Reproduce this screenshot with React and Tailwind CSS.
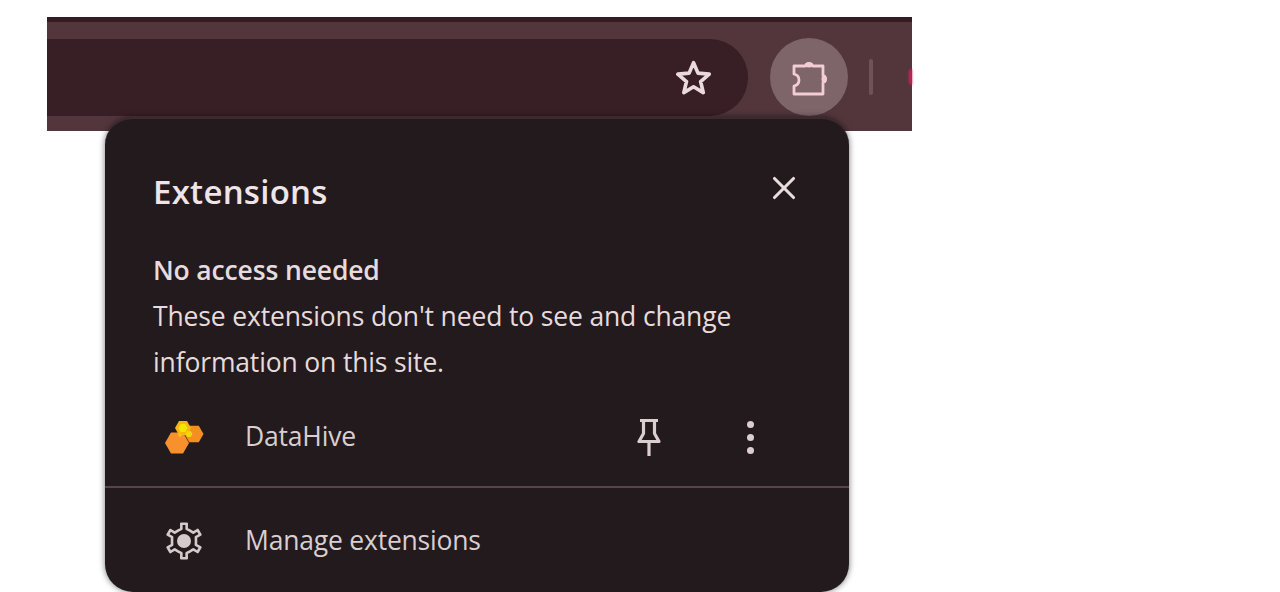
import React from 'react';
import { X } from 'lucide-react';

const FONT = "font-['Open_Sans','Noto_Sans',sans-serif]";

const hexPoints = (cx, cy, r) =>
  [0, 60, 120, 180, 240, 300]
    .map((a) => `${cx + r * Math.cos((a * Math.PI) / 180)},${cy + r * Math.sin((a * Math.PI) / 180)}`)
    .join(' ');

// six teeth, one pointing straight up
const gearPoints = () => {
  const pts = [];
  for (let i = 0; i < 6; i++) {
    const a = -90 + i * 60;
    [[-30, 12], [-12, 12.5], [-9, 17.5], [9, 17.5], [12, 12.5]].forEach(([d, r]) => {
      const t = ((a + d) * Math.PI) / 180;
      pts.push(`${(19 + r * Math.cos(t)).toFixed(2)},${(19 + r * Math.sin(t)).toFixed(2)}`);
    });
  }
  return pts.join(' ');
};

function StarIcon() {
  return (
    <svg width="42" height="42" viewBox="0 0 38 38" fill="none" className="blur-[0.5px]">
      <path d="M19.500 6l4 9.500 10.200.9-7.800 6.700 2.400 10L19.500 27.800l-8.800 5.300 2.400-10-7.800-6.700 10.200-.9z" stroke="#ead9dd" strokeWidth="3.300" strokeLinejoin="round" />
    </svg>
  );
}

function PuzzleIcon() {
  return (
    <svg width="40" height="40" viewBox="0 0 40 40" fill="none" className="blur-[0.5px]">
      <path d="M5 9h11.500c.8-3.500 6.200-3.500 7 0H34v9.500c3.500.8 3.500 6.200 0 7V37H5v-8c3.500-.8 5-3 5-6s-1.500-5.200-5-6z" stroke="#f3ccd6" strokeWidth="2.800" strokeLinejoin="round" />
      <ellipse cx="20" cy="8" rx="4" ry="2.500" fill="#f3ccd6" />
      <ellipse cx="35" cy="22" rx="2.500" ry="4" fill="#f3ccd6" />
    </svg>
  );
}

function PinIcon() {
  return (
    <svg width="28" height="40" viewBox="0 0 28 40" fill="none" className="blur-[0.5px]">
      <path d="M5 3.500h18M8.500 3.500v13L4 24.500h20l-4.500-8v-13M14 25v14" stroke="#dccdd0" strokeWidth="3.200" strokeLinejoin="round" />
    </svg>
  );
}

function HiveLogo() {
  return (
    <svg width="40" height="36" viewBox="0 0 40 36" className="blur-[0.6px]">
      <polygon points={hexPoints(29, 15, 9.500)} fill="#f58f22" />
      <polygon points={hexPoints(12, 24, 12)} fill="#f8902e" />
      <polygon points={hexPoints(18, 9, 8)} fill="#fbb512" />
      <polygon points={hexPoints(18, 9, 4.500)} fill="#f2e607" />
      <polygon points={hexPoints(24, 15, 3.500)} fill="#f0d80c" />
      <polygon points={hexPoints(15, 16, 2)} fill="#f3c31b" />
    </svg>
  );
}

function GearIcon() {
  return (
    <svg width="38" height="38" viewBox="0 0 38 38" fill="none" className="blur-[0.5px]">
      <polygon points={gearPoints()} stroke="#d6c9cc" strokeWidth="2.600" strokeLinejoin="round" />
      <circle cx="19" cy="19" r="7" fill="#d6c9cc" />
    </svg>
  );
}

export default function App() {
  return (
    <div className={`relative h-[592px] w-[1280px] overflow-hidden bg-white ${FONT}`}>
      <div className="ml-[47px] w-[865px] pt-[17px]">
        <div className="h-[114px] bg-[#52363c]">
          <div className="h-[5px] bg-[#351c22]" />
          <div className="flex items-center pt-[16px]">
            <div className="flex h-[77px] w-[701px] items-center justify-end rounded-r-[38px] bg-[#381f25] pr-[34px]">
              <StarIcon />
            </div>
            <div className="ml-[22px] flex h-[78px] w-[78px] items-center justify-center rounded-full bg-[#7d656a]">
              <PuzzleIcon />
            </div>
            <div className="ml-[21px] h-[36px] w-[4px] rounded-full bg-[#6e5359]" />
            <div className="ml-[36px] h-[16px] w-[3px] rounded-l-full bg-[#d21f5e] blur-[1px]" />
          </div>
        </div>
      </div>

      <div className="absolute left-[105px] top-[117px] h-[475px] w-[744px] rounded-[28px] border-t-2 border-[#3a2a2e] bg-[#221a1c] shadow-[0_0_6px_rgba(0,0,0,0.55)]">
        <div className="flex items-start justify-between pl-[48px] pr-[46px] pt-[47px]">
          <h1 className="text-[33px] font-semibold leading-[52px] tracking-[0.25px] text-[#efe4e7]">Extensions</h1>
          <X size={38} strokeWidth={2} className="mt-[3px] text-[#e8dcdf]" />
        </div>
        <div className="pl-[48px] pt-[29px] text-[#e6dbde]">
          <p className="text-[26.5px] font-semibold leading-[46px] tracking-[-0.15px]">No access needed</p>
          <p className="text-[26.5px] leading-[46px] tracking-[-0.15px]">These extensions don't need to see and change<br />information on this site.</p>
        </div>
        <div className="mt-[22px] flex h-[60px] items-center pl-[60px] text-[#d9ced1]">
          <HiveLogo />
          <span className="ml-[40px] w-[390px] text-[26.5px] tracking-[-0.2px]">DataHive</span>
          <PinIcon />
          <div className="ml-[84px] flex flex-col gap-[6px]">
            <span className="h-[7px] w-[7px] rounded-full bg-[#dccdd0]" />
            <span className="h-[7px] w-[7px] rounded-full bg-[#dccdd0]" />
            <span className="h-[7px] w-[7px] rounded-full bg-[#dccdd0]" />
          </div>
        </div>
        <div className="mt-[19px] h-[2px] bg-[#5a4449]" />
        <div className="mt-[23px] flex h-[60px] items-center pl-[60px] text-[#d9ced1]">
          <GearIcon />
          <span className="ml-[42px] text-[26.5px] tracking-[-0.2px]">Manage extensions</span>
        </div>
      </div>
    </div>
  );
}
